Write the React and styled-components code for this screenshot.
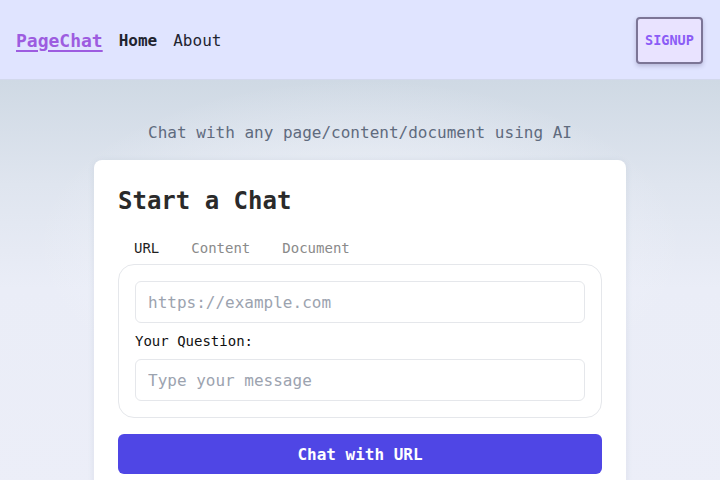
import React, { useState } from 'react';
import styled, { createGlobalStyle } from 'styled-components';

const GlobalStyle = createGlobalStyle`
  * { box-sizing: border-box; }
  html, body { margin: 0; padding: 0; }
  body {
    font-family: "DejaVu Sans Mono", "Liberation Mono", monospace;
    color: #1f2937;
  }
`;

const Page = styled.div`
  min-height: 100vh;
  display: flex;
  flex-direction: column;
`;

const Nav = styled.nav`
  height: 80px;
  display: flex;
  align-items: center;
  justify-content: space-between;
  padding: 1px 17px 0 16px;
  background-color: #e0e4ff;
  border-bottom: 1px solid #d2d8ec;
  box-shadow: 0 1px 3px rgba(100, 116, 139, 0.15);
`;

const NavLinks = styled.div`
  display: flex;
  align-items: center;
  gap: 16px;
`;

const Logo = styled.a`
  font-size: 18px;
  font-weight: 700;
  color: #9d5ce0;
  text-decoration: underline;
  text-decoration-thickness: 2px;
  text-underline-offset: 3px;
`;

const NavLink = styled.a`
  font-size: 16px;
  font-weight: ${p => (p.$active ? 700 : 400)};
  color: #1f2430;
  text-decoration: none;
`;

const SignupButton = styled.button`
  width: 67px;
  height: 47px;
  padding: 0;
  font-family: inherit;
  font-size: 13.5px;
  font-weight: 700;
  color: #8b5cf6;
  background-color: #e9e3ff;
  border: 2px solid #7c7596;
  border-radius: 4px;
  box-shadow: 0 2px 4px rgba(60, 50, 100, 0.25);
`;

const Main = styled.main`
  flex: 1;
  display: flex;
  flex-direction: column;
  align-items: center;
  padding-top: 43px;
  background:
    radial-gradient(ellipse 45% 40% at 50% 40%, rgba(244, 246, 252, 0.9) 0%, rgba(244, 246, 252, 0) 100%),
    linear-gradient(to bottom, #cfd9e4 0%, #dfe5ef 25%, #eaedf7 50%, #eceef8 100%);
`;

const Subtitle = styled.p`
  margin: 0 0 17px;
  font-size: 16px;
  line-height: 20px;
  color: #5f6b7e;
`;

const Card = styled.section`
  width: 532px;
  padding: 25px 24px 24px;
  background-color: #ffffff;
  border-radius: 8px;
  box-shadow: 0 1px 6px rgba(100, 116, 139, 0.12);
`;

const Title = styled.h2`
  margin: 0 0 15px;
  font-size: 24px;
  line-height: 32px;
  font-weight: 700;
  color: #2a2a2a;
`;

const Tabs = styled.div`
  display: flex;
`;

const Tab = styled.button`
  height: 32px;
  padding: 0 16px;
  font-family: inherit;
  font-size: 14px;
  color: ${p => (p.$active ? '#1f1f1f' : '#8a8a8a')};
  background: none;
  border: none;
`;

const Panel = styled.div`
  display: flex;
  flex-direction: column;
  padding: 16px;
  border: 1px solid #e5e7eb;
  border-radius: 16px;
`;

const Input = styled.input`
  width: 100%;
  height: 42px;
  padding: 0 12px;
  font-family: inherit;
  font-size: 16px;
  color: #1f2937;
  background-color: #ffffff;
  border: 1px solid #e5e7eb;
  border-radius: 6px;
  outline: none;

  &::placeholder {
    color: #9ca3af;
  }
`;

const Label = styled.label`
  margin: 8px 0;
  font-size: 14px;
  line-height: 20px;
  color: #111111;
`;

const SubmitButton = styled.button`
  width: 100%;
  height: 40px;
  margin-top: 16px;
  font-family: inherit;
  font-size: 16px;
  font-weight: 600;
  color: #ffffff;
  background-color: #4f46e5;
  border: none;
  border-radius: 6px;
`;

const tabs = ['URL', 'Content', 'Document'];

const App = () => {
  const [active, setActive] = useState('URL');

  return (
    <>
      <GlobalStyle />
      <Page>
        <Nav>
          <NavLinks>
            <Logo href="#">PageChat</Logo>
            <NavLink href="#" $active>Home</NavLink>
            <NavLink href="#">About</NavLink>
          </NavLinks>
          <SignupButton>SIGNUP</SignupButton>
        </Nav>
        <Main>
          <Subtitle>Chat with any page/content/document using AI</Subtitle>
          <Card>
            <Title>Start a Chat</Title>
            <Tabs>
              {tabs.map(t => (
                <Tab key={t} $active={t === active} onClick={() => setActive(t)}>
                  {t}
                </Tab>
              ))}
            </Tabs>
            <Panel>
              <Input placeholder="https://example.com" />
              <Label>Your Question:</Label>
              <Input placeholder="Type your message" />
            </Panel>
            <SubmitButton>Chat with URL</SubmitButton>
          </Card>
        </Main>
      </Page>
    </>
  );
};

export default App;
